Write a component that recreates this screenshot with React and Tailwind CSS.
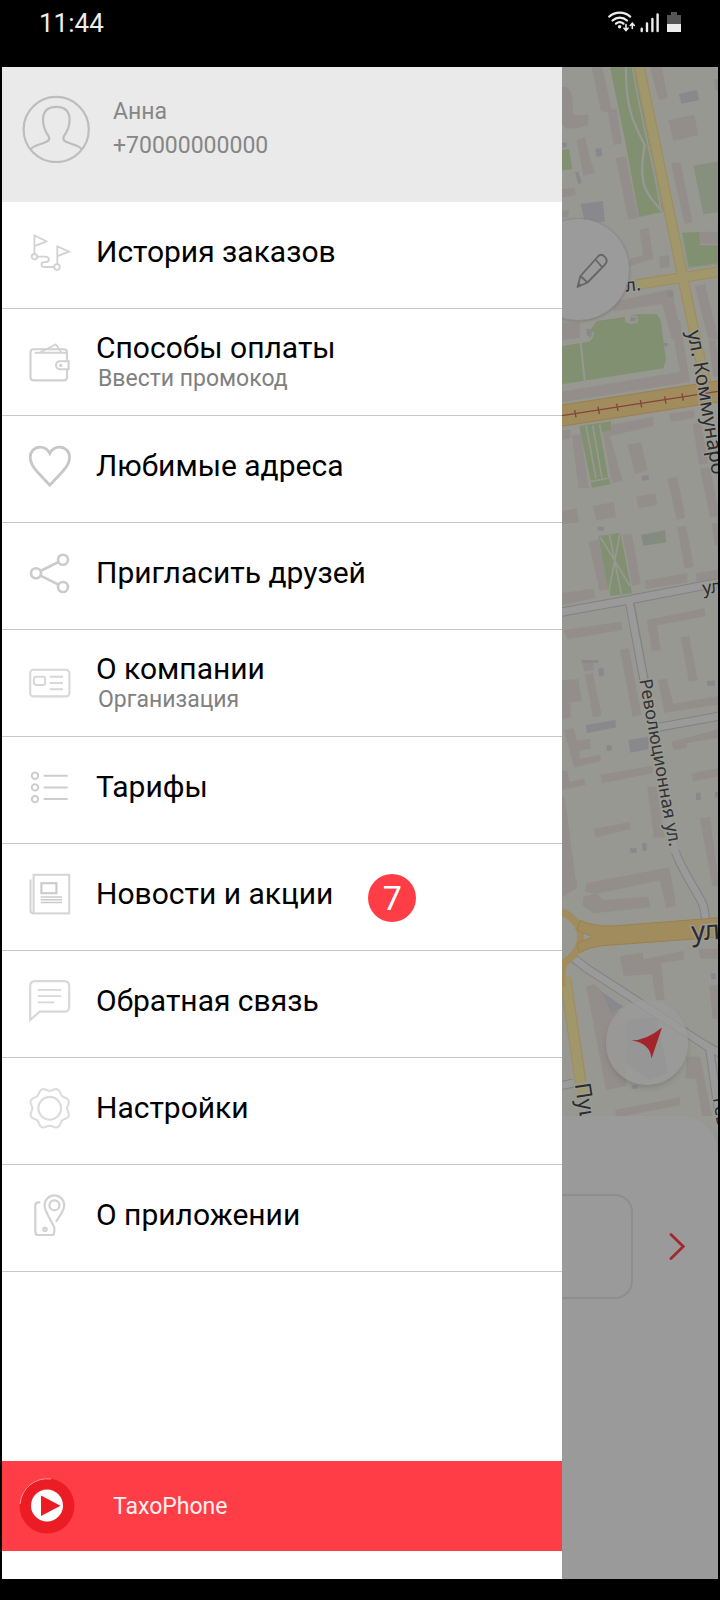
import React from "react";

const gearPath =
  Array.from({ length: 97 }, (_, i) => {
    const a = (i / 96) * Math.PI * 2;
    const r = 18.9 - 1.5 * Math.cos(8 * a);
    const x = (20.7 + r * Math.sin(a)).toFixed(2);
    const y = (21.3 - r * Math.cos(a)).toFixed(2);
    return `${i === 0 ? "M" : "L"}${x} ${y}`;
  }).join("") + "Z";

const icons = {
  route: (
    <g stroke="#d2d2d2" strokeWidth="1.8">
      <path d="M5.4 23V4.4L17.5 10.3L5.4 15.2" />
      <circle cx="5.4" cy="25.7" r="2.7" />
      <path d="M28.3 33V15.4L40.4 20.7L28.3 25.2" />
      <circle cx="28" cy="36" r="2.8" />
      <path d="M8.1 25.7H16c2.6 0 3.8 1 3.8 2.7s-1.2 2.7-3 2.7h-1.6c-1.8 0-2.8.9-2.8 2.5s1 2.4 2.8 2.4h10" />
    </g>
  ),
  wallet: (
    <g stroke="#d1d1d1" strokeWidth="2.1">
      <path d="M38 20.3V11.5c0-2-1-3.2-3-3.2H4.8c-2 0-3.3 1.2-3.3 3.2v24.7c0 2 1.3 3.2 3.3 3.2H35c2 0 3-1.2 3-3.2v-7.9" />
      <path d="M5.8 11.8H38" />
      <path d="M11.5 11.2L26.8 3.3L32.2 11.2" strokeWidth="1.7" />
      <path d="M39.6 20.3H31a4 4 0 0 0 0 8h8.6z" />
      <circle cx="31.7" cy="24.4" r="0.7" fill="#c8c8c8" />
    </g>
  ),
  heart: (
    <path
      stroke="#c7c7c7"
      strokeWidth="2.8"
      d="M20.8 8.4C18.5 4 15 2.1 11.2 2.1C5.4 2.1 1.2 6.5 1.2 12.5C1.2 18 4 22 8 26.5L20.8 40.2L33.6 26.5C37.6 22 40.6 18 40.6 12.5C40.6 6.5 36.2 2.1 30.4 2.1C26.6 2.1 23.1 4 20.8 8.4Z"
    />
  ),
  share: (
    <g stroke="#cbcbcb" strokeWidth="2.6">
      <circle cx="7" cy="21.3" r="5" />
      <circle cx="34" cy="7.7" r="5" />
      <circle cx="34" cy="35" r="5" />
      <path d="M11.5 19L29.5 10M11.5 23.6L29.5 32.7" />
    </g>
  ),
  card: (
    <g stroke="#d8d8d8" strokeWidth="2.1">
      <rect x="1.2" y="7.8" width="39.2" height="26.6" rx="3.2" />
      <rect x="4.9" y="14.8" width="11.2" height="8.2" rx="2.2" />
      <path d="M20.7 14.7H34M20.7 21H34M20.7 27.2H34" />
    </g>
  ),
  list: (
    <g stroke="#cdcdcd" strokeWidth="2">
      <circle cx="6" cy="9.7" r="3.2" />
      <circle cx="6" cy="21.4" r="3.2" />
      <circle cx="6" cy="33.1" r="3.2" />
      <path d="M14.7 9.7H38.7M14.7 21.4H38.7M14.7 33.1H38.7" />
    </g>
  ),
  news: (
    <g stroke="#d6d6d6" strokeWidth="2.1">
      <rect x="4.6" y="1.8" width="35.6" height="38.6" />
      <path d="M1.5 6.5V37.6c0 1.8 1.2 2.8 3.1 2.8" />
      <rect x="12.4" y="10.2" width="15" height="10" stroke="#cbcbcb" />
      <path d="M11.7 24H33M11.7 26.8H33M11.7 29.6H33" stroke="#cbcbcb" strokeWidth="1.5" />
    </g>
  ),
  chat: (
    <g stroke="#d8d8d8" strokeWidth="2.2">
      <path d="M1.2 40V6.2c0-3 2-5 5-5h29c3 0 5 2 5 5v20.5c0 3-2 5-5 5H10.6z" />
      <path d="M8.7 9.8H32.3M8.7 16.1H32.3M8.7 22.4H25.3" strokeWidth="1.8" />
    </g>
  ),
  gear: (
    <g stroke="#dcdcdc" strokeWidth="2.1">
      <path d={gearPath} />
      <circle cx="20.7" cy="21.3" r="11.4" />
    </g>
  ),
  phone: (
    <g stroke="#d2d2d2" strokeWidth="2.2">
      <path d="M11.3 8.4H9.5c-2 0-3.2 1.2-3.2 3.2V38c0 2 1.2 3.2 3.2 3.2h12.6c2 0 3.2-1.2 3.2-3.2v-4.6C22.5 26.5 15.6 18 15.6 11.2a9.8 9.8 0 0 1 19.6 0c0 5.5-4.5 10.6-8.2 16.4" />
      <circle cx="25.4" cy="11.3" r="5" />
      <circle cx="16" cy="35.3" r="1.7" />
    </g>
  ),
};

const items = [
  { icon: "route", title: "История заказов" },
  { icon: "wallet", title: "Способы оплаты", note: "Ввести промокод" },
  { icon: "heart", title: "Любимые адреса" },
  { icon: "share", title: "Пригласить друзей" },
  { icon: "card", title: "О компании", note: "Организация" },
  { icon: "list", title: "Тарифы" },
  { icon: "news", title: "Новости и акции", badge: 7 },
  { icon: "chat", title: "Обратная связь" },
  { icon: "gear", title: "Настройки" },
  { icon: "phone", title: "О приложении" },
];

function StatusBar() {
  return (
    <header className="flex h-[67px] items-start justify-between bg-black pr-[37px] pl-[37px] text-[#ededed]">
      <time className="pt-2 text-[26px] leading-[30px]">11:44</time>
      <svg className="mt-[10px] h-6 w-[74px]" viewBox="607 10 74 24" fill="none" stroke="#ededed" strokeLinecap="round">
        <path d="M609.2 16.6C615.5 11.4 624 11.4 630.2 16.6" strokeWidth="2.2" />
        <path d="M612.5 20.5C616.8 16.7 622.8 16.7 627 20.5" strokeWidth="2.2" />
        <path d="M616 23.7C618.3 21.800 621.2 21.8 623.5 23.7" strokeWidth="2.2" />
        <circle cx="619.6" cy="26.8" r="1.7" fill="#ededed" stroke="none" />
        <path d="M626 24.5V30M624 28.2L626 30.6L628 28.2M632.3 28.5V23.5M630.3 25.5L632.3 23.3L634.3 25.5" strokeWidth="1.6" />
        <path d="M641.7 28.7V31M647 23.500V31M652.4 19V31M657.6 14.5V31" strokeWidth="2.4" />
        <g stroke="none">
          <path d="M671 12h6v3h4v9h-14v-9h4z" fill="#555" />
          <rect x="667" y="24" width="14" height="8" fill="#ededed" />
        </g>
      </svg>
    </header>
  );
}

function Drawer() {
  return (
    <aside className="flex w-[560px] shrink-0 flex-col bg-white">
      <a href="#profile" className="flex h-[135px] items-start gap-[23px] bg-[#eaeaea] pt-7 pl-5 text-[23px] leading-[34px] text-[#868686]">
        <svg className="size-[68px]" viewBox="0 0 68 68" fill="none" stroke="#bdbdbd" strokeWidth="2.2">
          <circle cx="34.2" cy="34.5" r="32.6" />
          <path d="M9 54C11 50.5 19 49.5 25 46.5C27.5 45.2 27.8 43.5 26.5 41C23 36 21 31 21 25C21 16 26 11.8 34.2 11.8C42.600 11.8 47.6 16 47.6 25C47.6 31 45.6 36 42 41C40.800 43.5 41 45.2 43.5 46.5C49.500 49.5 57.500 50.5 59.500 54" />
        </svg>
        <span className="flex flex-col">
          <span>Анна</span>
          <span>+70000000000</span>
        </span>
      </a>

      <nav>
        <ul>
          {items.map((item) => (
            <li key={item.icon} className="border-b border-[#c6c6c6]">
              <a
                href={"#" + item.icon}
                className={
                  item.note
                    ? "flex h-[106px] items-center gap-[25px] pl-[27px]"
                    : "flex h-[106px] items-center gap-[25px] pb-1.5 pl-[27px]"
                }
              >
                <svg className="size-[42px] shrink-0" viewBox="0 0 42 42" fill="none">
                  {icons[item.icon]}
                </svg>
                <span className="flex flex-col">
                  <span className="text-[30px] leading-[34px] text-black">{item.title}</span>
                  {item.note && <span className="pl-0.5 text-[23px] leading-[28px] text-[#808080]">{item.note}</span>}
                </span>
                {item.badge && (
                  <span className="mt-2 ml-2.5 grid size-12 place-items-center rounded-full bg-[#ff3d47] text-[34px] leading-none text-white">
                    {item.badge}
                  </span>
                )}
              </a>
            </li>
          ))}
        </ul>
      </nav>

      <a href="#taxophone" className="mt-auto mb-7 flex h-[90px] items-center gap-[38px] bg-[#ff3d47] pl-[17px] text-[23px] text-[#fff0f0]">
        <svg className="size-14" viewBox="0 0 56 56">
          <circle cx="28" cy="28" r="27.5" fill="#ec1c24" />
          <path d="M1 26A27.3 27.3 0 0 1 32 1" fill="none" stroke="#ff9a9e" strokeWidth="1" />
          <circle cx="28" cy="27.500" r="16" fill="#fff" />
          <path d="M22 17.5V38L41.5 27.7z" fill="#ec1c24" />
        </svg>
        <span className="pt-0.5">TaxoPhone</span>
      </a>
    </aside>
  );
}

// Map sheets are drawn at three units per pixel, each from its own top edge.
function Tile({ y, children, ...rest }) {
  return (
    <g transform={`translate(560 ${y}) scale(0.33333)`} {...rest}>
      {children}
    </g>
  );
}

function CityMap() {
  const house = "#938e8b";
  const blue = "#88888d";
  const green = "#809070";
  return (
    <svg className="absolute inset-0 h-full w-full" viewBox="562 67 156 1512" preserveAspectRatio="xMinYMin slice" aria-hidden="true">
      <rect x="562" y="67" width="156" height="1512" fill="#979892" />
      <Tile y={0}>
        <path
          fill={house}
          d="M95 200h32l28 128 15-3 15 105-24 5-18-98-20-4zM270 200h35l18 95-27 6zM0 260l20 0 15 20 5 65 45 0 0 30-25 8-40 3-20-20zM462 237h20v35h-15zM50 420l25-8 15 62 15 45-35 8zM325 360l78-15 12 60-75 18zM333 490l28-4 37 180-24 6zM167 474l30-5 38 185-30 5zM5 567l40-4 2 22-42 8zM5 633l22-3-2 22h-20zM238 690l28-6 14 92-70 22 0-22 40-10zM298 770l28-6 3 36-30 6zM160 905l175-38 30 150h-30l-28-105-147 22zM405 860l30-8 40 165h-30z"
        />
        <path fill={blue} d="M356 282l55-12 6 30-52 11zM106 446l18-2 3 24-18 2zM45 517l10-2 10 34-10 3zM62 612l67-9 5 62-60 0zM5 428h15v14h-15zM82 987h14v20h-14zM322 874h18v16h-18z" />
        <path fill={green} d="M150 200h72l88 435-73 16-40-220z" />
        <path fill="#87907f" d="M400 497l80-14v152l-50 8z" />
        <path fill={green} d="M5 450l22-3 10 60-32 4zM366 698l52-2 3 40h60v58l-98 8z" />
        <path fill={house} d="M420 695h60v37l-58 0z" />
        <g fill="none" stroke="#979892" strokeWidth="7">
          <path d="M198 200C196 320 220 370 254 435C232 560 260 580 306 634" />
          <path d="M218 200C240 350 280 480 303 632" strokeWidth="5" />
          <path d="M366 700L385 805L480 790" strokeWidth="4" stroke="#8a9a80" />
        </g>
      </Tile>
      <Tile y={320}>
        <path fill={green} d="M95 25L110 3 170 -5 235 -17 290 -17 302 0 318 120 310 145 5 193V78L85 62z" />
        <path fill={house} d="M0 8h60v45l-60 8zM5 215L360 155 330 0h30l30 185-385 62zM0 330h32v25l-32 6zM35 345l28-3 23 162-30 0zM125 320l155-30v28l-130 30 38 135-32 6zM328 282l75-12v25l-70 10zM203 375l40-8 20 84-38 10zM398 312l25-6 22 125-28 3zM322 475l30-4 24 122-26 6zM420 445l30-3 28 145-28 6zM0 575l50-10 6 42-56 6zM98 558l64-12 5 45-58 10zM228 530l58-10 6 34-56 10zM352 622l26-4 24 122-28 6zM85 665l30-6 32 150-28 4zM188 645l28-3 26 150-25 6zM254 782l128-23v28l-124 20zM408 760l70-12v25l-68 12zM0 820l100-14 7 28-107 22zM455 610h25v65h-15zM445 60h20l20 110h-25z" />
        <path fill={green} d="M58 318l95-14v26l-28 6 26 157-55 10zM115 648l66-10 35 182-68 8z" />
        <path fill="#838c7f" d="M243 645l72-14 3 36-68 10z" />
        <path fill={blue} d="M245 468l20-3 2 15-20 2zM112 620h20v12h-18zM80 27h14v18h-14zM312 69h11v10h-11z" />
        <path fill="#979892" d="M195 -12h38v20l-20 4-18-6z" />
        <path fill={blue} d="M210 -8h18v12h-18z" />
        <g fill="none" stroke="#979892" strokeWidth="5">
          <path d="M5 75L75 64Q100 62 98 35M62 66L74 182" strokeWidth="6" />
          <path d="M78 317L108 475M98 315L126 475M119 313L147 473M90 485L148 474" />
          <path d="M120 650L210 798M148 642L184 822M180 640L148 805V828" />
        </g>
      </Tile>
      <Tile y={600}>
        <path fill={house} d="M10 90l174-25 3 25-165 28zM260 60l174-35 3 24-146 27 12 75-27 3zM362 112l26-3 25 132-26 4zM180 150l26-6 38 200-26 6zM67 184l32-3 3 30-30 3zM75 223l24-4 26 128-26 4zM294 240l26-4 20 75 138-24v27l-165 24zM0 240l55-3 10 65-35 6 4 45-34 4zM12 390l28-6 12 38 38-6 2 30-36 6 6 24 60-12v20l-80 18zM0 512l22 0 6 34 44-10 4 20-72 14zM122 524l155-27 2 22-152 31zM335 425l143-38v26l-98 16v15l-40 6zM396 520l82-16v25l-78 15zM262 562l26-3 26 152-32 4zM100 686l110-20 2 22-105 24zM0 590l14 0 36 270-50 8zM420 655l30-4 27 208h-20zM78 850l250-48 18 98h-28l-12-60-200 42-30-6z" />
        <path fill={blue} d="M78 375l88-15 2 22-88 18zM205 420l60-10v38l-54 10zM65 180h50v8h-50zM115 205h16v24h-14zM140 436h15v16h-15zM440 242h25v15h-23zM408 578h14v22h-14zM210 745h20v13h-18zM246 730h14v22h-12zM465 576h10v16h-10z" />
      </Tile>
      <Tile y={880}>
        <path fill={house} d="M5 0h45v25l-45 28zM70 50l40-10 20 20 135-10 5 32-170 18-32-22zM300 0h30l18 78-30 5zM180 228l68-10 2 20 120-25 4 25-70 12 10 110h-26l-12-78-85 6zM416 206h60v30h-56zM448 316h30v100h-20zM78 322l25-10 25 25 70 90 0 190-60 14-48-255zM165 690l195-38v24l-170 32h-22zM380 530h40l36 178h-30l-18-110-32-4z" />
        <path fill={blue} d="M125 335l65 45-35 20zM200 420l90-10 35 170-60 20-65-50zM452 280h16v18h-14zM215 616h18v10h-18z" />
      </Tile>

      <Tile y={320} fill="none">
        <path d="M0 877L195 842 480 787" stroke="#828282" strokeWidth="28" />
        <path d="M208 840L252 1080" stroke="#828282" strokeWidth="28" />
        <path d="M0 877L195 842 480 787" stroke="#9a9a9a" strokeWidth="22" />
        <path d="M208 845L252 1080" stroke="#9a9a9a" strokeWidth="21" />
      </Tile>
      <Tile y={600} fill="none">
        <path d="M295 382L480 348" stroke="#828282" strokeWidth="27" />
        <path d="M293 382L480 348" stroke="#9a9a9a" strokeWidth="21" />
        <path d="M245 240L340 740" stroke="#9a9a9a" strokeWidth="20" />
        <path d="M346 755C364 805 392 845 425 905C434 925 436 940 436 965" stroke="#828282" strokeWidth="27" />
        <path d="M340 735L346 755C364 805 392 845 425 905C434 925 436 940 436 965" stroke="#9a9a9a" strokeWidth="21" />
      </Tile>
      <Tile y={880} fill="none">
        <path d="M40 235L80 265 435 495 480 520M448 500L475 690M5 617L40 609" stroke="#828282" strokeWidth="27" />
        <path d="M35 230L80 265 435 495 480 520M448 500L475 690M5 617L40 609" stroke="#9a9a9a" strokeWidth="21" />
        <path d="M16 295L62 605" stroke="#a08c62" strokeWidth="35" />
        <path d="M16 290L66 640" stroke="#a0976a" strokeWidth="28" />
        <path d="M5 95Q60 120 62 168T10 250Q2 290 6 320" stroke="#a08c5c" strokeWidth="22" />
        <path d="M60 121Q100 140 160 138L480 113V171L130 197Q90 200 60 218L50 195Q60 185 70 182L98 171 70 160 52 150z" fill="#a08c5c" stroke="#9c7f4f" strokeWidth="3" />
        <path d="M72 162L98 171L72 177z" fill="#979892" />
      </Tile>
      <Tile y={0} fill="none">
        <path d="M228 854L480 815" stroke="#a08c62" strokeWidth="33" />
        <path d="M236 190L368 830L412 1040L450 1200" stroke="#a08c62" strokeWidth="33" />
        <path d="M229 854L480 815" stroke="#a0976a" strokeWidth="26" />
        <path d="M236 190L368 830L412 1040L450 1200" stroke="#a0976a" strokeWidth="26" />
      </Tile>
      <Tile y={320} fill="none">
        <path d="M0 288L480 213" stroke="#9c7f4f" strokeWidth="66" />
        <path d="M0 288L480 213" stroke="#a08c5c" strokeWidth="60" />
        <path d="M0 288L480 213M44 270L48 292M114 260L118 282M170 251L174 273M241 240L245 262M314 229L318 251M366 220L370 242" stroke="#86423b" strokeWidth="4" />
      </Tile>

      <g className="font-['Noto_Sans',sans-serif]" fill="#2c2c2c" stroke="#9c9c97" strokeWidth="8" strokeLinejoin="round" style={{ paintOrder: "stroke" }}>
        <Tile y={0}>
          <text x="198" y="875" fontSize="54" transform="rotate(-6 198 875)">л.</text>
        </Tile>
        <Tile y={320}>
          <path id="street-a" d="M382 34C400 130 412 200 426 280C436 350 450 420 480 600" fill="none" stroke="none" />
          <text fontSize="61"><textPath href="#street-a">ул. Коммунаро</textPath></text>
          <text x="430" y="823" fontSize="54" transform="rotate(-8 430 823)">ул</text>
        </Tile>
        <Tile y={600}>
          <path id="street-b" d="M238 240C255 340 275 440 292 540C305 620 318 680 340 800" fill="none" stroke="none" />
          <text fontSize="54" fill="#333"><textPath href="#street-b">Революционная ул.</textPath></text>
        </Tile>
        <Tile y={880}>
          <text x="396" y="183" fontSize="82" transform="rotate(-4 396 183)">ул</text>
          <text x="44" y="612" fontSize="66" transform="rotate(81 44 612)">Пуш</text>
          <text x="458" y="655" fontSize="54" transform="rotate(80 458 655)">Гев</text>
        </Tile>
      </g>
    </svg>
  );
}

function MapScreen() {
  return (
    <section className="relative flex min-w-0 flex-1 flex-col overflow-hidden bg-[#9a9a9a]">
      <CityMap />
      <button type="button" aria-label="Изменить адрес" className="absolute top-[151px] -left-9 h-[103px] w-[104px] rounded-full border border-[#8b8b8b] bg-[#9b9b9b] shadow-sm">
        <svg className="ml-12 size-9" viewBox="575 251 36 36" fill="none" stroke="#666" strokeWidth="1.8" strokeLinejoin="round">
          <path d="M577.5 286L580.5 275L597.5 256Q601 251.5 605 256Q608.5 260 605 263.5L587.5 281.5ZM580.5 275L587.5 281.5M595.5 258.5L602 266M577.5 286L580.5 283" />
        </svg>
      </button>
      <button type="button" aria-label="Моё местоположение" className="absolute top-[933px] right-[30px] grid h-[85px] w-[82px] place-items-center rounded-full bg-[#9b9b9b]/75 shadow-md">
        <svg className="size-8" viewBox="0 0 32 32">
          <path d="M0.5 13.5Q16 13 31 0.5L20.5 31.5Q19 16 0.5 13.5Z" fill="#a3252b" />
        </svg>
      </button>
      <div className="relative mt-auto flex h-[463px] items-start rounded-tr-[36px] bg-[#9a9a9a] pt-[78px] shadow-md">
        <div className="h-[105px] w-[71px] rounded-r-[18px] border-2 border-l-0 border-[#8e8e8e]" />
        <button type="button" aria-label="Далее" className="mt-[39px] ml-9">
          <svg className="h-[27px] w-4" viewBox="0 0 16 27" fill="none" stroke="#a0292e" strokeWidth="2.8" strokeLinecap="round">
            <path d="M2 1.5L14.300 13.5L2 25.5" />
          </svg>
        </button>
      </div>
    </section>
  );
}

export default function App() {
  return (
    <div className="flex min-h-screen flex-col bg-black px-[2px] pb-[21px] font-['Roboto','Noto_Sans',sans-serif]">
      <StatusBar />
      <main className="flex flex-1">
        <Drawer />
        <MapScreen />
      </main>
    </div>
  );
}
